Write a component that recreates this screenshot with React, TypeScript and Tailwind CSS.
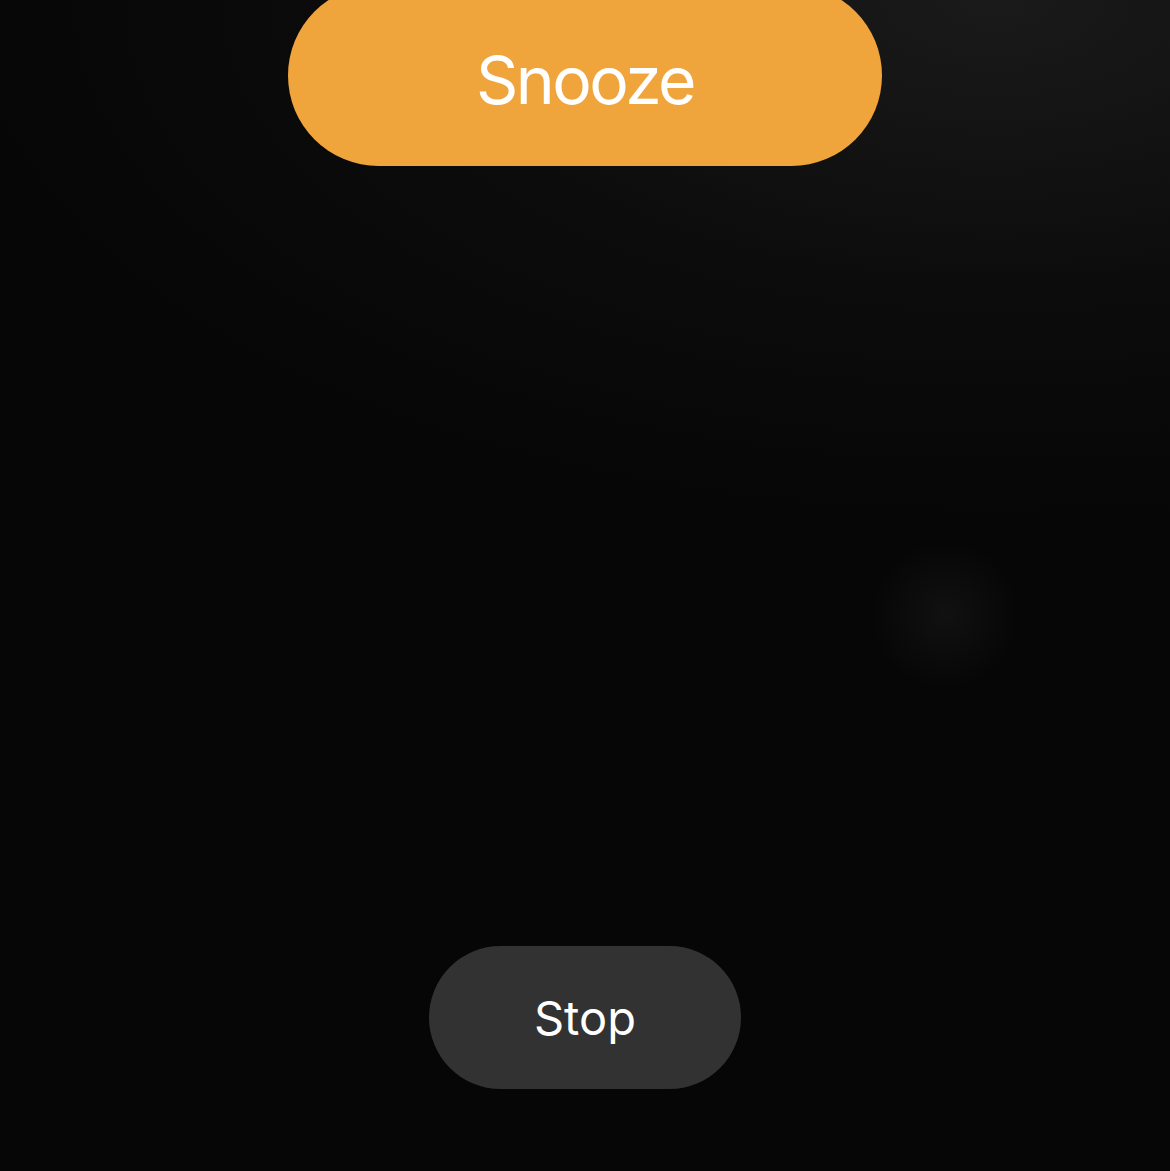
export default function App() {
  return (
    <div className="relative h-[1171px] w-full overflow-hidden bg-[radial-gradient(ellipse_90%_45%_at_85%_0%,#1a1a1a_0%,#0c0c0c_55%,#060606_100%)] font-['Inter',sans-serif] text-white">
      {/* Snooze */}
      <div className="flex justify-center">
        <button className="-mt-[15px] flex h-[181px] w-[594px] items-center justify-center rounded-full bg-[#f0a43c] pt-[8px]">
          <span className="text-[66px] leading-none tracking-[-2.6px]">Snooze</span>
        </button>
      </div>

      {/* faint blob */}
      <div className="absolute left-[870px] top-[540px] h-[150px] w-[150px] rounded-full bg-[radial-gradient(circle,#111111_0%,transparent_70%)]" />

      {/* Stop */}
      <div className="mt-[780px] flex justify-center">
        <button className="flex h-[143px] w-[312px] items-center justify-center rounded-full bg-[#323232]">
          <span className="text-[47px] leading-none">Stop</span>
        </button>
      </div>
    </div>
  );
}
